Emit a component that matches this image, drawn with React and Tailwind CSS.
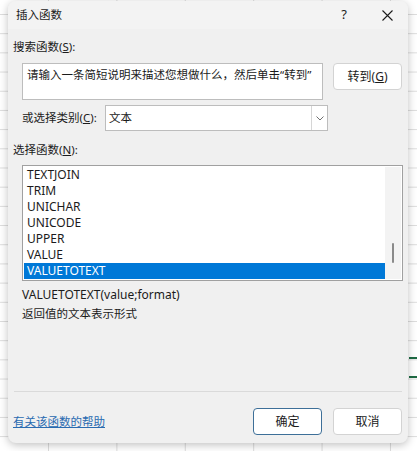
import React from 'react';

const FONT = "font-['Noto_Sans','Noto_Sans_CJK_SC',sans-serif]";

const functions = ['TEXTJOIN', 'TRIM', 'UNICHAR', 'UNICODE', 'UPPER', 'VALUE', 'VALUETOTEXT'];

function WinButton({ children, primary = false }) {
  return (
    <button
      type="button"
      className={
        'flex items-center justify-center w-[69px] h-[27px] rounded-[4px] bg-white text-[12px] text-[#1b1b1b] ' +
        (primary ? 'border border-[#3d6f98]' : 'border border-[#d3d3d3]')
      }
    >
      {children}
    </button>
  );
}

export default function App() {
  return (
    <div className={`relative w-[417px] h-[451px] overflow-hidden bg-white ${FONT}`}>
      {/* spreadsheet grid behind the dialog */}
      <div className="absolute inset-0 bg-[linear-gradient(to_right,#dcdcdc_1px,transparent_1px),linear-gradient(to_bottom,#dcdcdc_1px,transparent_1px)] bg-[size:68.4px_19.2px] bg-[position:48px_14px]" />
      <div className="absolute left-[409px] top-[357px] w-[10px] h-[21px] border-y-2 border-[#1e6b44]" />

      {/* dialog */}
      <div className="absolute left-[8px] top-[1px] w-[400px] h-[442px] flex flex-col rounded-[8px] bg-[#f0f0f0] shadow-[0_2px_8px_rgba(0,0,0,0.25)] text-[#1b1b1b]">
        {/* title bar */}
        <div className="flex items-center h-[28px] rounded-t-[8px] bg-[#f3f3f3]">
          <span className="pl-[8px] text-[11.5px] flex-1">插入函数</span>
          <span className="w-[44px] text-center text-[13px]">?</span>
          <span className="w-[42px] flex items-center justify-center">
            <svg width="11" height="11" viewBox="0 0 11 11" fill="none" stroke="#1b1b1b" strokeWidth="1.1">
              <path d="M0.5 0.5 L10.5 10.5 M10.5 0.5 L0.5 10.5" />
            </svg>
          </span>
        </div>

        <div className="flex flex-col px-[5px] text-[11.5px]">
          <div className="mt-[10px] h-[16px] leading-[16px]">
            搜索函数(<u>S</u>):
          </div>

          <div className="flex items-start mt-[8px]">
            <div className="ml-[9px] w-[301px] h-[37px] bg-white border border-[#bdbdbd] px-[4px] pt-[2px] leading-[17px]">
              请输入一条简短说明来描述您想做什么，然后单击“转到”
            </div>
            <div className="ml-[10px]">
              <WinButton>
                转到(<u>G</u>)
              </WinButton>
            </div>
          </div>

          <div className="flex items-center mt-[5px]">
            <span className="ml-[9px] w-[83px]">
              或选择类别(<u>C</u>):
            </span>
            <div className="flex w-[223px] h-[26px] bg-white border border-[#bdbdbd]">
              <span className="flex-1 pl-[3px] leading-[24px]">文本</span>
              <span className="w-[16px] flex items-center justify-center border-l border-[#d6d6d6]">
                <svg width="8" height="5" viewBox="0 0 8 5" fill="none" stroke="#707070" strokeWidth="1">
                  <path d="M0.5 0.5 L4 4 L7.5 0.5" />
                </svg>
              </span>
            </div>
          </div>

          <div className="mt-[11px] h-[16px] leading-[16px]">
            选择函数(<u>N</u>):
          </div>

          <div className="flex ml-[9px] mt-[7px] w-[381px] h-[116px] bg-white border border-[#a0a0a0] p-px">
            <div className="flex-1 flex flex-col text-[12px]">
              {functions.map((fn) => (
                <div
                  key={fn}
                  className={
                    'h-[16px] leading-[16px] pl-[3px] ' +
                    (fn === 'VALUETOTEXT' ? 'bg-[#0078d7] text-white' : '')
                  }
                >
                  {fn}
                </div>
              ))}
            </div>
            <div className="w-[16px] bg-[#f3f3f3] flex flex-col items-center">
              <div className="mt-[76px] w-[2px] h-[20px] rounded-full bg-[#8a8a8a]" />
            </div>
          </div>

          <div className="ml-[9px] mt-[4px] leading-[19px]">
            <div className="text-[12px]">VALUETOTEXT(value;format)</div>
            <div>返回值的文本表示形式</div>
          </div>
        </div>

        {/* footer */}
        <div className="mt-auto mx-[6px] border-t border-[#dadada] pt-[16px] pb-[8px] flex items-center">
          <a className="ml-[-1px] text-[11.5px] text-[#2a6bb0] underline flex-1">有关该函数的帮助</a>
          <WinButton primary>确定</WinButton>
          <div className="ml-[11px]">
            <WinButton>取消</WinButton>
          </div>
        </div>
      </div>
    </div>
  );
}
